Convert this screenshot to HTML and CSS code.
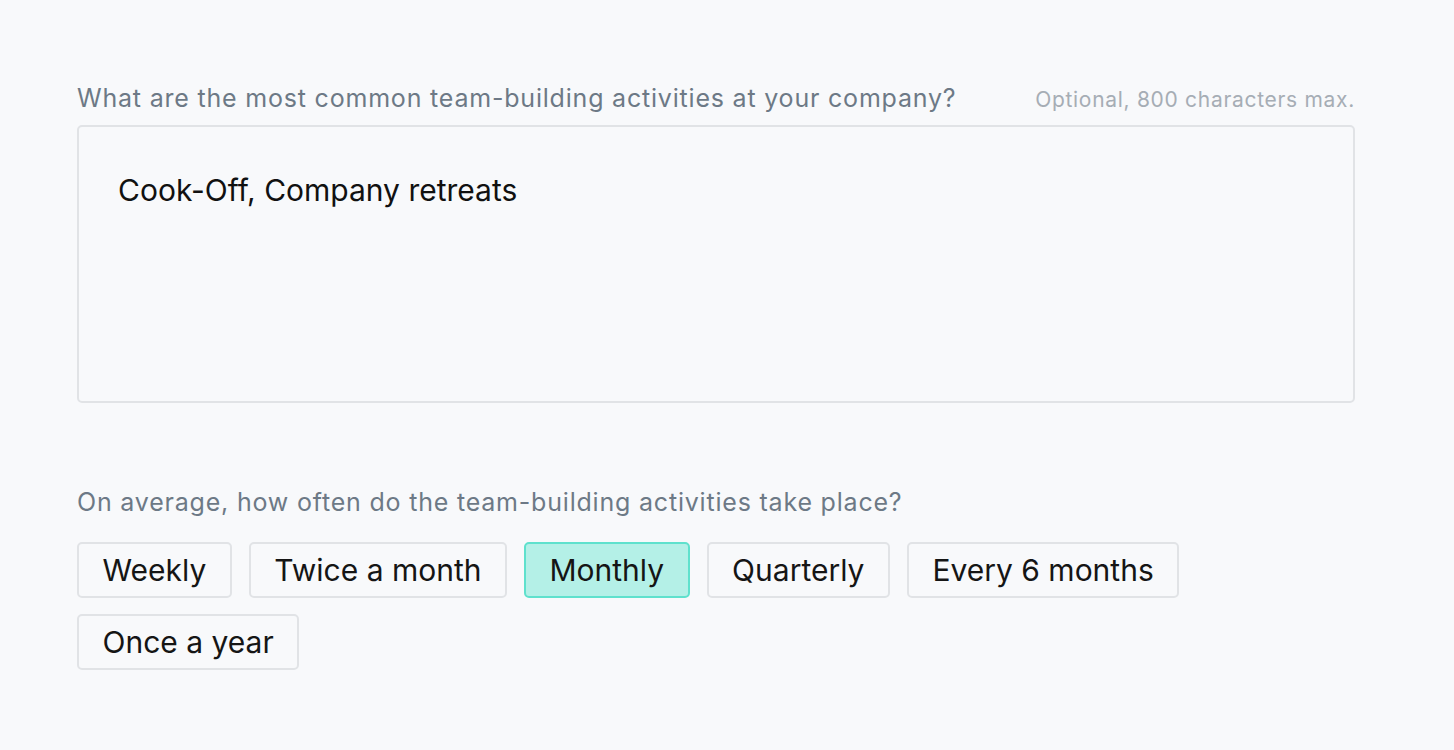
FILE: index.html
```html
<!DOCTYPE html>
<html>
<head>
<meta charset="utf-8">
<link rel="stylesheet" href="styles.css">
</head>
<body>
<main class="form">
  <div class="field-head">
    <label class="label">What are the most common team-building activities at your company?</label>
    <span class="hint">Optional, 800 characters max.</span>
  </div>
  <div class="textarea">Cook-Off, Company retreats</div>

  <div class="label label-second">On average, how often do the team-building activities take place?</div>
  <div class="options">
    <button class="option">Weekly</button>
    <button class="option">Twice a month</button>
    <button class="option option-selected">Monthly</button>
    <button class="option">Quarterly</button>
    <button class="option">Every 6 months</button>
    <button class="option">Once a year</button>
  </div>
</main>
</body>
</html>
```
FILE: styles.css
```css
html, body {
  margin: 0;
  padding: 0;
  background: #f8f9fb;
  font-family: Inter, "Liberation Sans", sans-serif;
}
.form {
  width: 1278px;
  padding: 82px 0 0 77px;
}
.field-head {
  display: flex;
  justify-content: space-between;
  align-items: baseline;
  height: 32px;
  margin-bottom: 11px;
}
.label {
  font-size: 25px;
  line-height: 32px;
  color: #6d7986;
  letter-spacing: 0.8px;
}
.hint {
  font-size: 21px;
  color: #a6adb5;
  letter-spacing: 0.7px;
}
.textarea {
  box-sizing: border-box;
  height: 278px;
  border: 2px solid #e1e3e6;
  border-radius: 5px;
  padding: 44px 39px;
  font-size: 30px;
  line-height: 38px;
  color: #111;
}
.label-second {
  margin-top: 83px;
  margin-bottom: 24px;
}
.options {
  display: flex;
  flex-wrap: wrap;
  gap: 16px 17px;
}
.option {
  box-sizing: border-box;
  height: 56px;
  padding: 0 23.5px;
  border: 2px solid #e1e3e6;
  border-radius: 5px;
  background: #f8f9fb;
  font-family: inherit;
  font-size: 30px;
  color: #151515;
}
.option-selected {
  background: #b4f0e7;
  border-color: #5fe1cd;
}
```
